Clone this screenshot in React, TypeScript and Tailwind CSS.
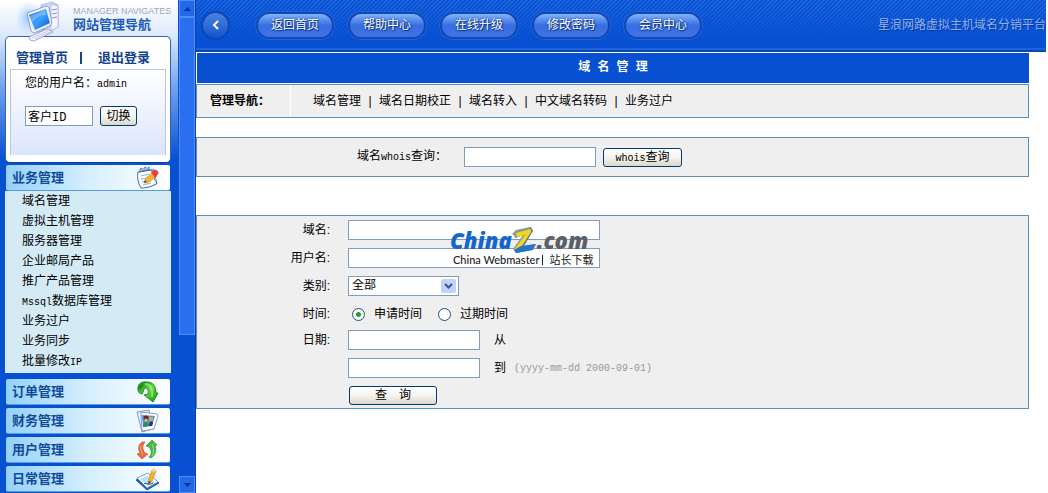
import { useState } from "react";
import type { ReactNode } from "react";

const topLinks = ["返回首页", "帮助中心", "在线升级", "修改密码", "会员中心"];

const navLinks = ["域名管理", "域名日期校正", "域名转入", "中文域名转码", "业务过户"];

const businessItems: { latin?: string; text: string; suffix?: string }[] = [
  { text: "域名管理" },
  { text: "虚拟主机管理" },
  { text: "服务器管理" },
  { text: "企业邮局产品" },
  { text: "推广产品管理" },
  { latin: "Mssql", text: "数据库管理" },
  { text: "业务过户" },
  { text: "业务同步" },
  { text: "批量修改", suffix: "IP" },
];

const inputClasses =
  "h-5 border border-[#7f9db9] bg-white px-1 text-[12px] text-black outline-none";
const buttonClasses =
  "rounded-[3px] border border-[#003c74] bg-linear-to-b from-white via-[#f5f4ee] to-[#dcd7cb] text-[12px] leading-none text-black";

function Latin({ children }: { children: ReactNode }) {
  return <span className="font-['Liberation_Mono',monospace] text-[10px]">{children}</span>;
}

function ComputerIcon() {
  return (
    <svg width="46" height="46" viewBox="0 0 46 46" aria-hidden="true">
      <defs>
        <linearGradient id="screen" x1="0" y1="0" x2="1" y2="1">
          <stop offset="0" stopColor="#1462dc" />
          <stop offset="0.5" stopColor="#3ba3ff" />
          <stop offset="1" stopColor="#0b50cc" />
        </linearGradient>
        <radialGradient id="halo">
          <stop offset="0" stopColor="#7fc0ff" stopOpacity="0.9" />
          <stop offset="1" stopColor="#b8dcff" stopOpacity="0" />
        </radialGradient>
      </defs>
      <ellipse cx="12" cy="18" rx="14" ry="17" fill="url(#halo)" />
      <path d="m24 5 11-3 6 3v22l-9 5-8-4z" fill="#d3daf3" stroke="#9aa6d4" strokeWidth="0.7" />
      <path d="m34 4 7 2v21l-7 4z" fill="#f6f7fe" stroke="#9aa6d4" strokeWidth="0.6" />
      <path d="m35 10 5-1M35 14l5-1M35 18l5-1" stroke="#8290c9" strokeWidth="1" />
      <path d="m10 13 19-7c2 0 3 1 3 2l3 15-2 3-16 7-3-2z" fill="#eef1fd" stroke="#8792c7" strokeWidth="0.9" />
      <path d="m12 15 17-6 4 14-15 7z" fill="url(#screen)" />
      <path d="m13 16 15-6 1 5c-6 0-10 3-14 8z" fill="#fff" opacity="0.3" />
      <path d="m20 33 8-4 3 3-9 4z" fill="#bdc6ea" stroke="#8792c7" strokeWidth="0.6" />
      <path d="m12 37 18-8 6 3-19 9-4-1z" fill="#f5f6ff" stroke="#8b96ca" strokeWidth="0.8" />
      <path d="m15 38 16-7M18 39l15-7" stroke="#b0b9df" strokeWidth="0.8" />
    </svg>
  );
}

function NotesIcon() {
  return (
    <svg width="24" height="24" viewBox="0 0 24 24" aria-hidden="true">
      <path d="m6 5 12-2 3 15-12 4z" fill="#c9dcf8" stroke="#7396cf" strokeWidth="0.8" />
      <path d="m2 6 14-2c0 5 2 9 5 13-3 3-10 5-16 5C2 17 1 11 2 6z" fill="#fafdff" stroke="#3f6db5" />
      <path d="m5 10 8-2M5 13l7-1M6 16l9-1M7 19l8-2" stroke="#8eb1e4" />
      <path d="M4 7V3l2-1v4M8 6V2l2-1v4M12 5V2l1-1v4" fill="none" stroke="#4068a8" strokeWidth="0.9" />
      <path d="m8 17 2-5 7-6 4 4-8 6z" fill="#fbb52d" stroke="#e08b19" strokeWidth="0.7" />
      <path d="m15 6 3-2c2-1 6 2 4 4l-3 4z" fill="#ed3f39" />
      <path d="m8 17 1-3 2 2z" fill="#5a4733" />
    </svg>
  );
}

function GreenArrowIcon() {
  return (
    <svg width="24" height="24" viewBox="0 0 24 24" aria-hidden="true">
      <defs>
        <linearGradient id="green" x1="0" y1="0" x2="1" y2="1">
          <stop offset="0" stopColor="#128414" />
          <stop offset="0.5" stopColor="#62dc3f" />
          <stop offset="1" stopColor="#118a16" />
        </linearGradient>
      </defs>
      <path
        d="M2 10C1 4 6 1 11 2c6 0 9 4 9 11h2l-5 9-9-7 4-1c1-4-1-6-3-6-2 1-1 4-3 6-2 0-4-2-4-4z"
        fill="url(#green)"
        stroke="#0f7614"
        strokeWidth="0.8"
      />
      <path d="M9 4c5 0 8 4 7 13" fill="none" stroke="#b7f697" strokeWidth="2" opacity="0.6" />
      <path d="M4 9c0-2 1-3 3-4" fill="none" stroke="#0c5e10" strokeWidth="1.5" opacity="0.6" />
    </svg>
  );
}

function PhotosIcon() {
  return (
    <svg width="24" height="24" viewBox="0 0 24 24" aria-hidden="true">
      <path d="m1 3 12-2 4 19-11 3z" fill="#e6ebfa" stroke="#7082bc" strokeWidth="0.8" />
      <path d="m5 3 16 2 1 2-4 13-12 2z" fill="#fff" stroke="#7384bd" strokeWidth="0.8" />
      <path d="m6 6 13 1-3 10-9 1z" fill="#4f91e2" />
      <circle cx="10" cy="9" r="2.5" fill="#5b3218" />
      <circle cx="10" cy="11" r="1.5" fill="#f5c17e" />
      <circle cx="15" cy="10" r="2.2" fill="#e6a645" />
      <path d="M7 18c0-6 5-6 6-1z" fill="#2f8f47" />
      <path d="M13 17c0-6 4-5 4-3l-1 3z" fill="#22357c" />
    </svg>
  );
}

function ExchangeIcon() {
  return (
    <svg width="24" height="24" viewBox="0 0 24 24" aria-hidden="true">
      <path d="M6 4C2 7 2 11 4 15l-3 1 5 5 6-5-3-1C6 11 6 8 9 4z" fill="#ee6b3f" stroke="#c9441f" strokeWidth="0.6" />
      <path d="M15 20c4-2 6-8 4-12l2-1-5-5-6 6 3 1c3 4 3 7 0 10z" fill="#4bb849" stroke="#268a2c" strokeWidth="0.6" />
      <path d="M5 8c-1 3 0 6 2 9M16 6c2 4 2 8 0 12" fill="none" stroke="#fff" strokeWidth="1" opacity="0.4" />
    </svg>
  );
}

function PencilPadIcon() {
  return (
    <svg width="24" height="24" viewBox="0 0 24 24" aria-hidden="true">
      <path d="m0 13 12-6 11 9-12 7z" fill="#1c63bd" stroke="#12408a" strokeWidth="0.8" />
      <path d="m1 11 11-5 10 9-11 6z" fill="#fff" stroke="#4e86d0" strokeWidth="0.8" />
      <path d="m4 12 7-3 8 6-8 4z" fill="#b5e2f8" />
      <path d="m12 17 1-6 3-8 4 1-4 10z" fill="#fbb225" stroke="#c67a16" strokeWidth="0.6" />
      <path d="m15 4 2-3 3 1-1 3z" fill="#f3d5b8" />
      <path d="m12 17 1-3 2 1z" fill="#333" />
      <path d="M8 17c2-2 4 2 9-1" fill="none" stroke="#163f86" />
    </svg>
  );
}

const collapsedSections = [
  { title: "订单管理", icon: <GreenArrowIcon /> },
  { title: "财务管理", icon: <PhotosIcon /> },
  { title: "用户管理", icon: <ExchangeIcon /> },
  { title: "日常管理", icon: <PencilPadIcon /> },
];

function SectionHeader({ title, icon }: { title: string; icon: ReactNode }) {
  return (
    <button
      type="button"
      className="mx-px flex h-[26px] items-center justify-between rounded-[2px] border-b border-[#5b9be0] bg-linear-to-r from-[#93d1fb] via-[#d5effd] to-white pr-2.5 pl-1.5 text-[13px] font-bold text-[#114a98]"
    >
      {title}
      {icon}
    </button>
  );
}

function Sidebar() {
  return (
    <aside className="flex w-[178px] shrink-0 flex-col bg-[#0750d2] bg-[linear-gradient(#ffffff_0px,#dce8fb_36px,#6c9fec_90px,#0750d2_160px)] bg-no-repeat pl-[5px] pr-[7px]">
      <header className="relative h-9 pl-[68px] pt-[7px]">
        <div className="absolute top-0 left-3">
          <ComputerIcon />
        </div>
        <p className="font-['Liberation_Sans',sans-serif] text-[9px] leading-[9px] whitespace-nowrap text-[#a2a8b6]">
          MANAGER NAVIGATES
        </p>
        <h1 className="text-[13px] leading-[18px] font-bold text-[#1c5cb8]">网站管理导航</h1>
      </header>

      <section className="h-[127px] rounded-[5px] border border-[#2b66b8] border-b-[#0a3f9d] bg-white px-1 pt-2.5">
        <nav className="flex h-[22px] items-center gap-3 pl-1.5 text-[13px] font-bold text-[#15438d]">
          <a href="#home">管理首页</a>
          <span className="h-3 w-0.5 bg-[#15438d]" />
          <a href="#logout" className="pl-1">
            退出登录
          </a>
        </nav>
        <div className="h-[87px] border border-[#b9c8e4] border-b-white bg-linear-to-b from-white to-[#dbe5fb] pl-3.5 pt-1">
          <p className="leading-[18px]">
            您的用户名：<Latin>admin</Latin>
          </p>
          <form className="mt-3 flex gap-[7px]">
            <input
              aria-label="客户ID"
              defaultValue="客户ID"
              className="h-5 w-[68px] border border-[#7f9db9] bg-white px-0.5 font-['Liberation_Mono','Noto_Sans_CJK_SC',monospace] text-[12px] outline-none"
            />
            <button type="button" className={`h-5 w-[37px] ${buttonClasses}`}>
              切换
            </button>
          </form>
        </div>
      </section>

      <div className="mt-0.5 flex flex-col">
        <SectionHeader title="业务管理" icon={<NotesIcon />} />
        <ul className="mb-1.5 bg-[#d4ebf6] pt-px pb-px pl-[17px]">
          {businessItems.map((item) => (
            <li key={item.text} className="h-5 leading-[18px]">
              <a href="#menu">
                {item.latin && <Latin>{item.latin}</Latin>}
                {item.text}
                {item.suffix && <Latin>{item.suffix}</Latin>}
              </a>
            </li>
          ))}
        </ul>
      </div>

      <div className="flex flex-col gap-[3px]">
        {collapsedSections.map((section) => (
          <SectionHeader key={section.title} title={section.title} icon={section.icon} />
        ))}
      </div>
    </aside>
  );
}

function ScrollArrow({ down }: { down?: boolean }) {
  return (
    <button
      type="button"
      aria-label={down ? "向下滚动" : "向上滚动"}
      className="flex h-[17px] w-full items-center justify-center border border-[#4f8df8] bg-[#2468ea]"
    >
      <svg width="7" height="4" viewBox="0 0 7 4" aria-hidden="true">
        <path d={down ? "M0 0h7L3.5 4z" : "M0 4h7L3.5 0z"} fill="#0a2f8c" />
      </svg>
    </button>
  );
}

function Scrollbar() {
  return (
    <div className="flex w-[18px] shrink-0 flex-col border-r border-[#0a44ab] bg-[#0750d2] pl-px">
      <ScrollArrow />
      <div className="flex-1">
        <div className="h-[318px] border border-[#4f8df8] bg-[#2a6ff0]" />
      </div>
      <ScrollArrow down />
    </div>
  );
}

function TopBar() {
  return (
    <header className="mr-0.5 flex h-[52px] items-center justify-between border-b-2 border-[#0a48ac] bg-[linear-gradient(#0750d200,#0750d2_40px,#0750d2_48px,#2f74e6_49px,#0750d2_50px),repeating-linear-gradient(135deg,#2c73e6_0px,#0750d2_1px,#0750d2_2px,#2c73e6_3px)] pl-[5px]">
      <div className="flex items-center">
        <button
          type="button"
          aria-label="后退"
          className="mr-[26px] flex size-[29px] items-center justify-center rounded-full border-2 border-[#0c47b4] bg-linear-to-b from-[#4b83dc] to-[#1253cf]"
        >
          <svg width="8" height="10" viewBox="0 0 8 10" aria-hidden="true">
            <path d="M6 1 2 5l4 4" fill="none" stroke="#fff" strokeWidth="2" />
          </svg>
        </button>
        <nav className="flex gap-3.5">
          {topLinks.map((label) => (
            <a
              key={label}
              href="#top"
              className="flex h-[27px] w-[78px] items-center justify-center rounded-full border-2 border-[#0f49b2] bg-linear-to-b from-[#82b3fa] via-[#376ee0] to-[#4072e6] text-white ring-1 ring-[#2460d6] [text-shadow:0_0_2px_#072f7a,1px_1px_1px_#072f7a]"
            >
              {label}
            </a>
          ))}
        </nav>
      </div>
      <p className="text-[#8cb2f5] [text-shadow:1px_1px_1px_#0a3690]">星浪网路虚拟主机域名分销平台</p>
    </header>
  );
}

function Watermark() {
  return (
    <div className="pointer-events-none absolute top-2.5 left-[253px]">
      <div className="flex items-end font-['Open_Sans',sans-serif] text-[22px] leading-7 font-extrabold italic">
        <span className="text-[#1465cf]">China</span>
        <svg width="25" height="28" viewBox="0 0 25 28" aria-hidden="true">
          <path d="m2 7 17-6 2 4-9 15 12-2-3 6-17 3-2-3 10-15-9 3z" fill="#5f7a86" />
          <path d="m0 8 4-4 14-3 1 5L8 22l-5 3-2-2L11 9 4 11z" fill="#8d9a90" />
          <path d="m4 7 15-4v3L8 23l-6 1L13 9l-8 2z" fill="#f1d51f" />
          <path d="m2 24 7-4 15-2-4 6-16 3z" fill="#2474cf" />
        </svg>
        <span className="text-[#5b6067]">.com</span>
      </div>
      <div className="flex items-center gap-[3px] text-[11px] leading-3 whitespace-nowrap text-[#222]">
        <span className="pl-[3px] font-['Lato',sans-serif] text-[11px] font-medium">China Webmaster</span>
        <span className="h-2.5 w-px bg-[#222]" />
        <span className="pl-[3px]">站长下载</span>
      </div>
    </div>
  );
}

function WhoisForm() {
  return (
    <form className="mt-[19px] flex h-10 items-center border border-[#5b8fb9] bg-[#efefef] pl-40">
      <label htmlFor="whois" className="w-[107px]">
        域名<Latin>whois</Latin>查询：
      </label>
      <input id="whois" className={`w-[132px] ${inputClasses}`} />
      <button type="button" className={`ml-[7px] h-[19px] w-[79px] ${buttonClasses}`}>
        <Latin>whois</Latin>查询
      </button>
    </form>
  );
}

function Row({ label, htmlFor, children }: { label?: string; htmlFor?: string; children: ReactNode }) {
  return (
    <div className="flex h-[28px] items-center">
      <label htmlFor={htmlFor} className="mr-[18px] w-[133px] text-right">
        {label}
      </label>
      {children}
    </div>
  );
}

function SearchForm() {
  const [timeType, setTimeType] = useState("apply");
  const radioClasses =
    "size-[13px] appearance-none rounded-full border border-[#1c5180] bg-white checked:bg-[radial-gradient(circle,#21a121_0px,#21a121_2px,#ffffff_3px)]";

  return (
    <form className="relative mt-[38px] border border-[#5b8fc4] bg-[#efefef]">
      <Row label="域名:" htmlFor="domain">
        <input id="domain" className={`w-[252px] ${inputClasses}`} />
      </Row>
      <Row label="用户名:" htmlFor="username">
        <input id="username" className={`w-[252px] ${inputClasses}`} />
      </Row>
      <Row label="类别:" htmlFor="category">
        <div className="relative">
          <select
            id="category"
            className="h-5 w-[111px] appearance-none border border-[#7f9db9] bg-white pb-0.5 pl-[3px] text-[12px] leading-none outline-none"
          >
            <option>全部</option>
          </select>
          <span className="pointer-events-none absolute top-[3px] right-[3px] flex h-3.5 w-[15px] items-center justify-center rounded-[2px] bg-[#c1d3fb]">
            <svg width="9" height="6" viewBox="0 0 9 6" aria-hidden="true">
              <path d="m1 1 3.5 3.5L8 1" fill="none" stroke="#3d5687" strokeWidth="2" />
            </svg>
          </span>
        </div>
      </Row>
      <Row label="时间:">
        <label className="flex items-center gap-[9px] pl-1">
          <input
            type="radio"
            name="timeType"
            checked={timeType === "apply"}
            onChange={() => setTimeType("apply")}
            className={radioClasses}
          />
          申请时间
        </label>
        <label className="flex items-center gap-[9px] pl-4">
          <input
            type="radio"
            name="timeType"
            checked={timeType === "expire"}
            onChange={() => setTimeType("expire")}
            className={radioClasses}
          />
          过期时间
        </label>
      </Row>
      <div className="-mt-0.5">
        <Row label="日期:" htmlFor="from">
          <input id="from" className={`mr-3.5 w-[132px] ${inputClasses}`} />从
        </Row>
      </div>
      <Row>
        <input id="to" aria-label="到" className={`mr-3.5 w-[132px] ${inputClasses}`} />到
        <span className="pl-2 text-[#999]">
          <Latin>(yyyy-mm-dd 2000-09-01)</Latin>
        </span>
      </Row>
      <div className="flex h-[26px] items-center pl-[152px]">
        <button type="button" className={`h-[19px] w-[88px] ${buttonClasses}`}>
          {"查\u3000询"}
        </button>
      </div>
      <Watermark />
    </form>
  );
}

export default function App() {
  return (
    <div className="flex min-h-screen bg-white font-['Liberation_Sans','Noto_Sans_CJK_SC',sans-serif] text-[12px] leading-4 text-black">
      <Sidebar />
      <Scrollbar />
      <div className="min-w-0 flex-1">
        <TopBar />
        <main className="mr-[19px]">
          <h2 className="mt-px ml-px flex h-[30px] items-center justify-center bg-[#0750d2] font-['Liberation_Mono','Noto_Sans_CJK_SC',monospace] font-bold text-white">
            域 名 管 理
          </h2>
          <div className="mt-px flex h-[34px] items-center border border-[#5b8fb9] bg-[#efefef]">
            <span className="flex h-full w-[94px] items-center border-r border-white pl-[13px] font-bold">
              管理导航：
            </span>
            <nav className="flex items-center pl-[22px]">
              {navLinks.map((label, i) => (
                <span key={label} className="flex items-center">
                  {i > 0 && <span className="w-[18px] text-center">|</span>}
                  <a href="#nav">{label}</a>
                </span>
              ))}
            </nav>
          </div>
          <WhoisForm />
          <SearchForm />
        </main>
      </div>
    </div>
  );
}
